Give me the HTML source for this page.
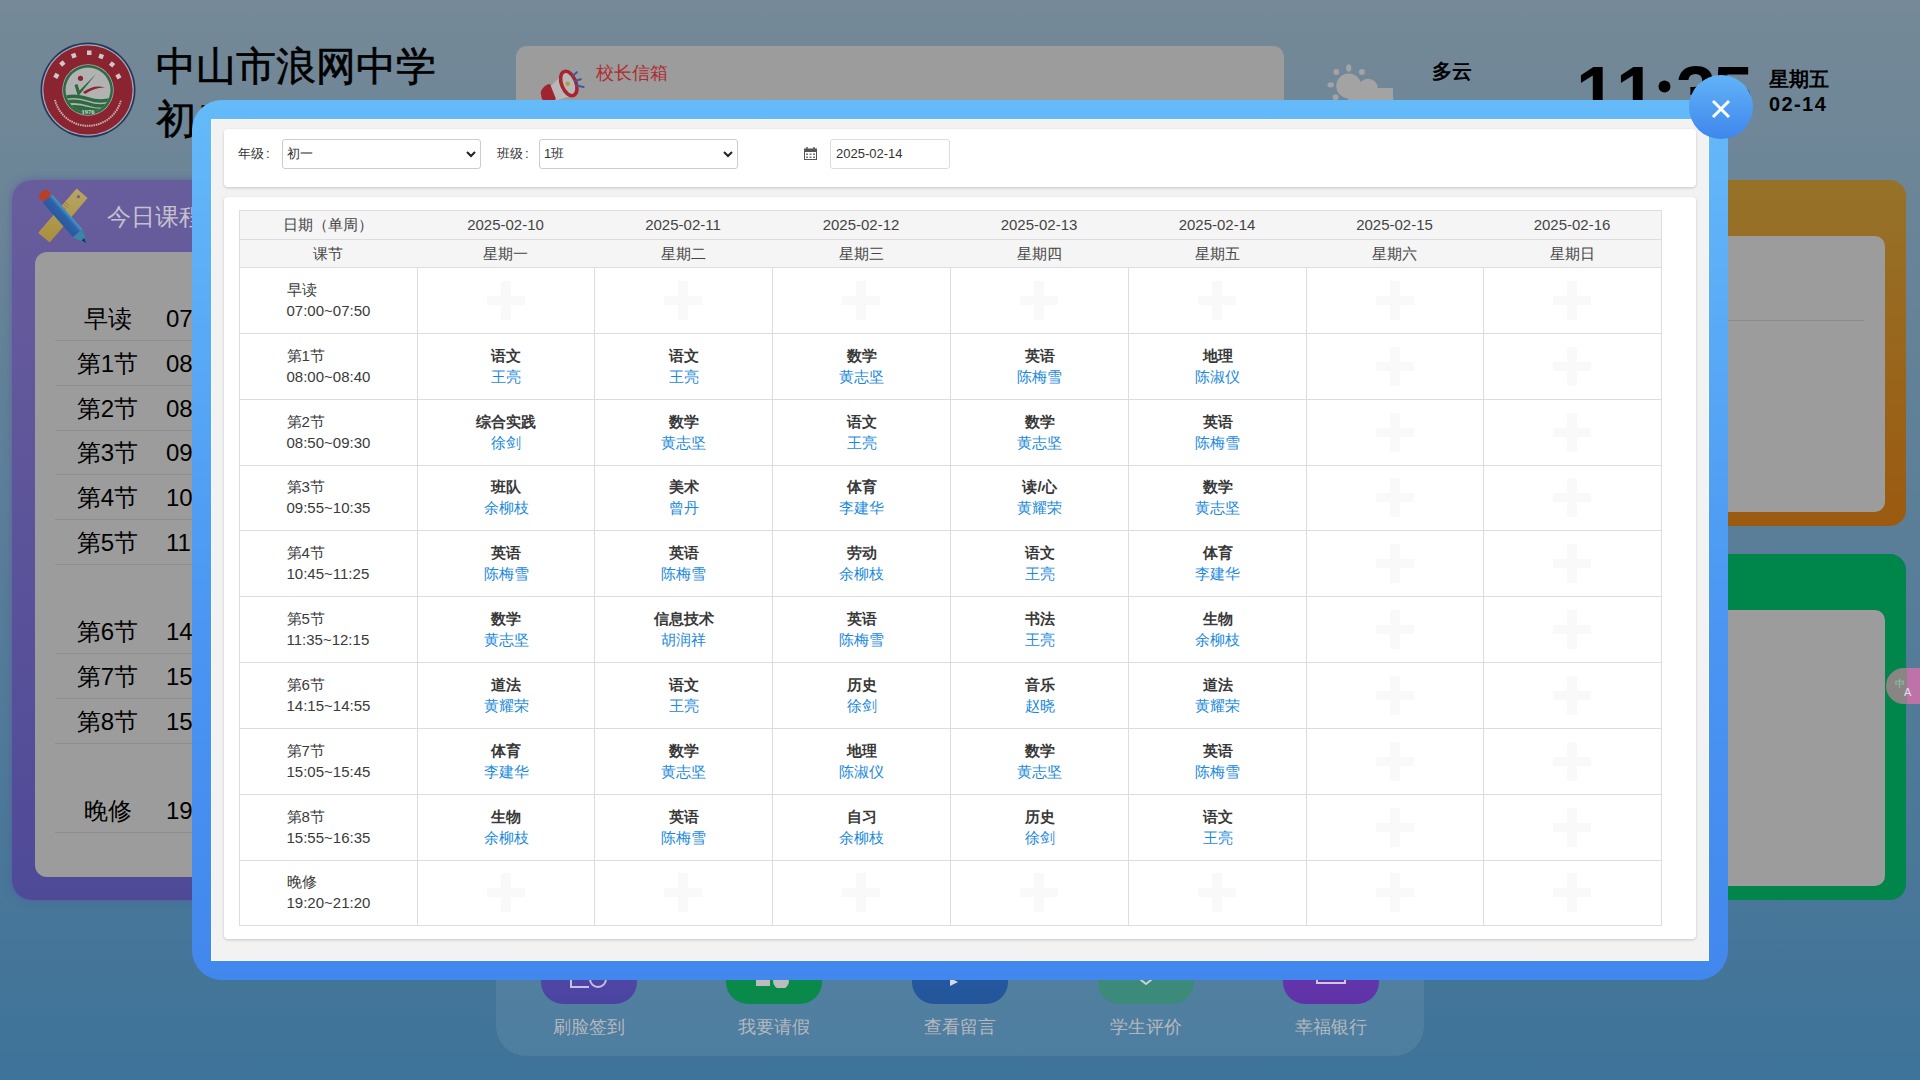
<!DOCTYPE html>
<html lang="zh">
<head>
<meta charset="utf-8">
<title>课程表</title>
<style>
*{box-sizing:border-box;margin:0;padding:0}
html,body{width:1920px;height:1080px;overflow:hidden}
body{position:relative;font-family:"Liberation Sans",sans-serif;background:linear-gradient(180deg,#758997 0%,#5a7e98 50%,#3e7399 100%)}
.abs{position:absolute}
/* page behind */
.title{position:absolute;left:156px;top:40px;font-size:40px;-webkit-text-stroke:0.6px #000;line-height:53px;color:#000;white-space:nowrap}
.notice{position:absolute;left:516px;top:46px;width:768px;height:120px;border-radius:11px;background:#9c9c9c}
.notice .t{position:absolute;left:80px;top:15px;font-size:18px;color:#b02a2e;line-height:24px}
.weather{position:absolute;left:1432px;top:58px;font-size:20px;font-weight:bold;color:#000;line-height:26px}
.clock{position:absolute;left:1576px;top:52px;font-size:72px;font-weight:bold;color:#000;line-height:80px;letter-spacing:0px}
.wk{position:absolute;left:1769px;top:67px;font-size:20px;font-weight:bold;color:#000;line-height:25px}
.lcard{position:absolute;left:12px;top:180px;width:400px;height:720px;border-radius:20px;background:linear-gradient(180deg,#685d9c 0%,#4f4a98 100%);box-shadow:0 0 8px rgba(90,80,160,.6)}
.lcard .h{position:absolute;left:95px;top:20px;font-size:24px;color:#c4c2cf;line-height:34px}
.lpanel{position:absolute;left:23px;top:72px;width:360px;height:625px;border-radius:12px;background:#9c9c9c}
.srow{position:absolute;left:20px;width:340px;height:45px;border-bottom:1px solid #8e8e8e}
.srow span{position:absolute;font-size:24px;line-height:45px;color:#000}
.srow .n{left:0;width:105px;text-align:center}
.srow .tm{left:111px}
.rcard{position:absolute;left:1560px;width:346px;height:346px;border-radius:16px}
.rpanel{position:absolute;left:22px;top:56px;width:303px;height:276px;border-radius:10px;background:#9c9c9c}
.dock{position:absolute;left:496px;top:940px;width:928px;height:116px;border-radius:30px;background:rgba(255,255,255,.075)}
.btn{position:absolute;top:924px;width:96px;height:80px;border-radius:22px}
.bl{position:absolute;top:1014px;width:140px;text-align:center;font-size:18px;line-height:26px;color:#b4b8bd}
/* modal */
.modal{position:absolute;left:192px;top:100px;width:1536px;height:880px;border-radius:30px;background:linear-gradient(180deg,#65baf9 0%,#4a96f2 60%,#4287ed 100%)}
.mbody{position:absolute;left:211px;top:119px;width:1498px;height:842px;background:#f2f2f2;border:1px solid #f2fbff}
.card{position:absolute;background:#fff;border-radius:4px;box-shadow:0 1px 3px rgba(0,0,0,.18)}
.lab{position:absolute;top:145px;font-size:13px;line-height:18px;color:#333}
.sel{position:absolute;top:139px;width:199px;height:30px;border:1px solid #ccc;border-radius:3px;background:#fff;font-size:13px;line-height:28px;padding-left:4px;color:#333}
.sel svg{position:absolute;right:4px;top:11px}
.inp{position:absolute;left:830px;top:139px;width:120px;height:30px;border:1px solid #ddd;border-radius:3px;background:#fff;font-family:"Liberation Sans",sans-serif;font-size:13px;line-height:28px;padding-left:5px;color:#333}
.thbg{position:absolute;background:#f5f5f5}
.hl{position:absolute;height:1px;background:#dddddd}
.vl{position:absolute;width:1px;background:#dddddd}
.hc{position:absolute;display:flex;align-items:center;justify-content:center;font-size:15px;color:#444;line-height:20px}
.pc{position:absolute;padding-bottom:2px;display:flex;align-items:center;justify-content:center;font-size:15px;color:#3a3a3a;line-height:21px}
.pi{text-align:left;width:83px}
.cc{position:absolute;padding-bottom:2px;display:flex;align-items:center;justify-content:center;text-align:center;font-size:15px;line-height:21px}
.cc b{color:#383838;font-weight:bold}
.cc span{color:#1a88dc}
.plus{position:absolute;width:38px;height:39px}
.plus:before{content:"";position:absolute;left:0;top:15px;width:38px;height:9px;background:#f9f9f9}
.plus:after{content:"";position:absolute;left:14px;top:0;width:10px;height:39px;background:#f9f9f9}
.close{position:absolute;left:1689px;top:75px;width:64px;height:64px;border-radius:50%;background:linear-gradient(180deg,#62b3f8 0%,#3f86ec 100%)}
.close svg{position:absolute;left:22px;top:24px}
.tr{position:absolute;left:1886px;top:668px;width:60px;height:36px;border-radius:18px;background:linear-gradient(90deg,#8a8585 0px,#8a8585 21px,#bf72a8 21px)}
</style>
</head>
<body>
<!-- logo -->
<svg class="abs" style="left:40px;top:42px" width="96" height="96" viewBox="0 0 96 96">
  <defs><clipPath id="inner"><circle cx="48" cy="48" r="22.5"/></clipPath></defs>
  <circle cx="48" cy="48" r="47.5" fill="#22365f"/>
  <circle cx="48" cy="48" r="45.8" fill="#a8a9b2"/>
  <circle cx="48" cy="48" r="44.6" fill="#8a2430"/>
  <circle cx="48" cy="48" r="25.8" fill="#a9a9ad"/>
  <circle cx="48" cy="48" r="25" fill="#2c6a40"/>
  <circle cx="48" cy="48" r="22.5" fill="#b2b2b2"/>
  <g clip-path="url(#inner)">
    <path d="M20 55 Q34 50 48 55 Q62 60 76 54 L76 57.5 Q62 63.5 48 58.5 Q34 53.5 20 58.5 Z" fill="#2c6a40"/>
    <path d="M20 60 Q34 55 48 60 Q62 65 76 59 L76 62.5 Q62 68.5 48 63.5 Q34 58.5 20 63.5 Z" fill="#2c6a40"/>
    <path d="M20 65 Q34 61 48 65 Q62 69 76 64 L76 80 L20 80 Z" fill="#2c6a40"/>
  </g>
  <circle cx="40.5" cy="36.3" r="2.6" fill="#8a2430"/>
  <path d="M34.5 43 L38 54.5 L56 32 L39.5 48.5 L37.5 42 Z" fill="#2c6a40"/>
  <path d="M43 50 Q54 42 65 45.5 Q55 45 45 52 Z" fill="#8a2430"/>
  <text x="48" y="72" font-size="6.5" font-weight="bold" fill="#d8d8d0" text-anchor="middle" font-family="Liberation Serif">1976</text>
  <g fill="#d0c8c8">
    <rect x="14" y="32" width="4.5" height="4.5" transform="rotate(-60 16 34)"/>
    <rect x="20" y="19.5" width="4.5" height="4.5" transform="rotate(-40 22 21.5)"/>
    <rect x="31.5" y="11.5" width="4.5" height="4.5" transform="rotate(-20 33.5 13.5)"/>
    <rect x="47" y="8.5" width="4.5" height="4.5"/>
    <rect x="59" y="12" width="4.5" height="4.5" transform="rotate(20 61 14)"/>
    <rect x="70" y="20" width="4.5" height="4.5" transform="rotate(40 72 22)"/>
    <rect x="76.5" y="32" width="4.5" height="4.5" transform="rotate(60 78.5 34)"/>
  </g>
  <path d="M15 58 A34 34 0 0 0 81 58" stroke="#c8b0b0" stroke-width="2" fill="none" stroke-dasharray="1.5 0.8"/>
</svg>
<div class="title">中山市浪网中学<br>初二</div>

<div class="notice">
  <svg class="abs" style="left:19px;top:16px" width="55" height="40" viewBox="0 0 55 40">
    <path d="M13 27 L28 12 L39 33 L19 39 Z" fill="#b8b8b8"/>
    <path d="M6 29 Q10 22 15 22 L21 37 Q17 41 9 40 Q5 35 6 29 Z" fill="#a02430"/>
    <ellipse cx="33.8" cy="21.5" rx="7.2" ry="12.8" transform="rotate(-22 33.8 21.5)" fill="#b9b9b9" stroke="#a8242e" stroke-width="3.6"/>
    <circle cx="32.7" cy="21.8" r="2.2" fill="#b09a40"/>
    <path d="M38 13.4 L41.9 10.2 M39.8 19 L45.8 17.3 M41.5 23.6 L48.6 25" stroke="#3e5a9a" stroke-width="2" stroke-linecap="round"/>
  </svg>
  <div class="t">校长信箱</div>
</div>
<!-- weather icon -->
<svg class="abs" style="left:1315px;top:55px" width="90" height="45" viewBox="0 0 90 45">
  <g fill="#a3a3a3">
    <ellipse cx="33.75" cy="13.1" rx="2.6" ry="3.75"/>
    <circle cx="21.3" cy="17.1" r="3"/><circle cx="46.9" cy="16.9" r="3"/>
    <ellipse cx="15.7" cy="29.8" rx="3.3" ry="2.6"/><circle cx="20.6" cy="42.2" r="3"/>
    <circle cx="33.75" cy="31" r="12.5"/>
    <circle cx="53" cy="33.5" r="9.8"/>
    <circle cx="70" cy="45" r="8.5"/>
    <rect x="33" y="33" width="45" height="12"/>
  </g>
</svg>
<div class="weather">多云</div>
<div class="clock" style="left:1576px">1</div><div class="clock" style="left:1616px">1</div><svg class="abs" style="left:1658px;top:80px" width="13" height="13" viewBox="0 0 13 13"><circle cx="6.5" cy="6.5" r="6" fill="#000"/></svg><div class="clock" style="left:1676px">3</div><div class="clock" style="left:1713px">5</div>
<div class="wk">星期五<br><span style="letter-spacing:1.4px">02-14</span></div>

<!-- left card -->
<div class="lcard">
  <svg class="abs" style="left:20px;top:2px" width="64" height="66" viewBox="0 0 64 66">
    <defs><linearGradient id="rul" x1="0" y1="0" x2="0" y2="1"><stop offset="0" stop-color="#b9a664"/><stop offset="1" stop-color="#a88e3c"/></linearGradient>
    <linearGradient id="pen" x1="0" y1="0" x2="0" y2="1"><stop offset="0" stop-color="#4b9cc6"/><stop offset="0.35" stop-color="#2d62a8"/><stop offset="1" stop-color="#2a58a0"/></linearGradient></defs>
    <path d="M44.6 6.4 L55.6 15.9 L17.7 60.5 L6.1 50.7 Z" fill="url(#rul)"/>
    <circle cx="46.4" cy="14.7" r="1.6" fill="#6a5f9a"/>
    <path d="M33 20 L37 23.5 M31.5 22 L35.5 25.5 M30 24 L34 27.5" stroke="#a07850" stroke-width="1"/>
    <g transform="translate(12.8 13.5) rotate(49)">
      <rect x="-5" y="-6" width="10" height="12" rx="4.5" fill="#b8402a"/>
      <rect x="4" y="-6.2" width="46" height="12.4" fill="url(#pen)"/>
      <path d="M50 -6.2 L61 -1.5 L61 1.5 L50 6.2 Z" fill="#3a86a8"/>
      <path d="M58 -2 L63 0 L58 2 Z" fill="#1a3870"/>
    </g>
  </svg>
  <div class="h">今日课程</div>
  <div class="lpanel">
    <div class="srow" style="top:44px"><span class="n">早读</span><span class="tm">07:00-07:50</span></div>
    <div class="srow" style="top:89px"><span class="n">第1节</span><span class="tm">08:00-08:40</span></div>
    <div class="srow" style="top:134px"><span class="n">第2节</span><span class="tm">08:50-09:30</span></div>
    <div class="srow" style="top:178px"><span class="n">第3节</span><span class="tm">09:55-10:35</span></div>
    <div class="srow" style="top:223px"><span class="n">第4节</span><span class="tm">10:45-11:25</span></div>
    <div class="srow" style="top:268px"><span class="n">第5节</span><span class="tm">11:35-12:15</span></div>
    <div class="srow" style="top:357px"><span class="n">第6节</span><span class="tm">14:15-14:55</span></div>
    <div class="srow" style="top:402px"><span class="n">第7节</span><span class="tm">15:05-15:45</span></div>
    <div class="srow" style="top:447px"><span class="n">第8节</span><span class="tm">15:55-16:35</span></div>
    <div class="srow" style="top:536px"><span class="n">晚修</span><span class="tm">19:20-21:20</span></div>
  </div>
</div>

<!-- right cards -->
<div class="rcard" style="top:180px;background:linear-gradient(180deg,#967229 0%,#9b5a10 100%)"><div class="rpanel" style="top:56px;height:276px"><div class="abs" style="left:0;top:84px;width:282px;height:1px;background:#8a8a8a"></div></div></div>
<div class="rcard" style="top:554px;background:#00854a"><div class="rpanel"></div></div>
<div class="tr"><svg class="abs" style="left:8px;top:8px" width="22" height="22" viewBox="0 0 22 22"><text x="1" y="11" font-size="10" fill="#7ccfa0">中</text><text x="10" y="20" font-size="11" fill="#e0e0f0" font-family="Liberation Sans">A</text></svg></div>

<!-- dock -->
<div class="dock"></div>
<div class="btn" style="left:541px;background:linear-gradient(180deg,#5e4ab0,#4a44a0)"><svg class="abs" style="left:28px;top:42px" width="40" height="24" viewBox="0 0 40 24"><path d="M2 6 V21 H20" stroke="#c8c0e8" stroke-width="2" fill="none"/><circle cx="29" cy="13" r="8" stroke="#c8c0e8" stroke-width="2" fill="none"/></svg></div>
<div class="btn" style="left:726px;background:#0a8a4a"><svg class="abs" style="left:28px;top:48px" width="40" height="16" viewBox="0 0 40 16"><rect x="2" y="4" width="14" height="10" fill="#bcbcbc"/><circle cx="27" cy="9" r="8" fill="#bcbcbc"/></svg></div>
<div class="btn" style="left:912px;background:linear-gradient(180deg,#2a5fa8,#22559a)"><svg class="abs" style="left:36px;top:52px" width="16" height="16" viewBox="0 0 16 16"><path d="M2 2 L10 6 L2 10 Z" fill="#d8d8e8"/></svg></div>
<div class="btn" style="left:1098px;background:#3b8a7a"><svg class="abs" style="left:36px;top:50px" width="24" height="16" viewBox="0 0 24 16"><path d="M2 2 L12 10 L22 2" stroke="#c8d8d0" stroke-width="2" fill="none"/></svg></div>
<div class="btn" style="left:1283px;background:linear-gradient(180deg,#6a3ab0,#6032a8)"><svg class="abs" style="left:32px;top:48px" width="32" height="16" viewBox="0 0 32 16"><path d="M2 0 V11 H30 V0" stroke="#d0c8e0" stroke-width="2" fill="none"/></svg></div>
<div class="bl" style="left:519px">刷脸签到</div>
<div class="bl" style="left:704px">我要请假</div>
<div class="bl" style="left:890px">查看留言</div>
<div class="bl" style="left:1076px">学生评价</div>
<div class="bl" style="left:1261px">幸福银行</div>

<!-- modal -->
<div class="modal"></div>
<div class="mbody"></div>
<div class="card" style="left:224px;top:129px;width:1472px;height:58px"></div>
<div class="lab" style="left:238px">年级<span style="margin-left:2px">:</span></div>
<div class="sel" style="left:282px">初一<svg width="10" height="7" viewBox="0 0 10 7"><path d="M1 1 L5 5 L9 1" stroke="#222" stroke-width="2" fill="none"/></svg></div>
<div class="lab" style="left:497px">班级<span style="margin-left:2px">:</span></div>
<div class="sel" style="left:539px">1班<svg width="10" height="7" viewBox="0 0 10 7"><path d="M1 1 L5 5 L9 1" stroke="#222" stroke-width="2" fill="none"/></svg></div>
<svg class="abs" style="left:804px;top:147px" width="13" height="13" viewBox="0 0 13 13"><rect x="0.5" y="2" width="12" height="10.5" fill="none" stroke="#555" stroke-width="1"/><rect x="0.5" y="2" width="12" height="3" fill="#555"/><path d="M3 0 V3 M10 0 V3" stroke="#555" stroke-width="1.5"/><g fill="#777"><rect x="2" y="6.5" width="2" height="1.5"/><rect x="5.5" y="6.5" width="2" height="1.5"/><rect x="9" y="6.5" width="2" height="1.5"/><rect x="2" y="9.5" width="2" height="1.5"/><rect x="5.5" y="9.5" width="2" height="1.5"/><rect x="9" y="9.5" width="2" height="1.5"/></g></svg>
<div class="inp">2025-02-14</div>
<div class="card" style="left:224px;top:197px;width:1472px;height:742px"></div>
<div class="thbg" style="left:239px;top:210px;width:1423px;height:57px"></div>
<div class="hl" style="left:239px;top:210px;width:1423px"></div>
<div class="hl" style="left:239px;top:239px;width:1423px"></div>
<div class="hl" style="left:239px;top:267px;width:1423px"></div>
<div class="hl" style="left:239px;top:333px;width:1423px"></div>
<div class="hl" style="left:239px;top:399px;width:1423px"></div>
<div class="hl" style="left:239px;top:465px;width:1423px"></div>
<div class="hl" style="left:239px;top:530px;width:1423px"></div>
<div class="hl" style="left:239px;top:596px;width:1423px"></div>
<div class="hl" style="left:239px;top:662px;width:1423px"></div>
<div class="hl" style="left:239px;top:728px;width:1423px"></div>
<div class="hl" style="left:239px;top:794px;width:1423px"></div>
<div class="hl" style="left:239px;top:860px;width:1423px"></div>
<div class="hl" style="left:239px;top:925px;width:1423px"></div>
<div class="vl" style="left:239px;top:210px;height:716px"></div>
<div class="vl" style="left:1661px;top:210px;height:716px"></div>
<div class="vl" style="left:417px;top:267px;height:659px"></div>
<div class="vl" style="left:594px;top:267px;height:659px"></div>
<div class="vl" style="left:772px;top:267px;height:659px"></div>
<div class="vl" style="left:950px;top:267px;height:659px"></div>
<div class="vl" style="left:1128px;top:267px;height:659px"></div>
<div class="vl" style="left:1306px;top:267px;height:659px"></div>
<div class="vl" style="left:1483px;top:267px;height:659px"></div>
<div class="hc" style="left:239px;top:211px;width:178px;height:28px">日期（单周）</div>
<div class="hc" style="left:239px;top:240px;width:178px;height:27px">课节</div>
<div class="hc" style="left:417px;top:211px;width:177px;height:28px">2025-02-10</div>
<div class="hc" style="left:417px;top:240px;width:177px;height:27px">星期一</div>
<div class="hc" style="left:594px;top:211px;width:178px;height:28px">2025-02-11</div>
<div class="hc" style="left:594px;top:240px;width:178px;height:27px">星期二</div>
<div class="hc" style="left:772px;top:211px;width:178px;height:28px">2025-02-12</div>
<div class="hc" style="left:772px;top:240px;width:178px;height:27px">星期三</div>
<div class="hc" style="left:950px;top:211px;width:178px;height:28px">2025-02-13</div>
<div class="hc" style="left:950px;top:240px;width:178px;height:27px">星期四</div>
<div class="hc" style="left:1128px;top:211px;width:178px;height:28px">2025-02-14</div>
<div class="hc" style="left:1128px;top:240px;width:178px;height:27px">星期五</div>
<div class="hc" style="left:1306px;top:211px;width:177px;height:28px">2025-02-15</div>
<div class="hc" style="left:1306px;top:240px;width:177px;height:27px">星期六</div>
<div class="hc" style="left:1483px;top:211px;width:178px;height:28px">2025-02-16</div>
<div class="hc" style="left:1483px;top:240px;width:178px;height:27px">星期日</div>
<div class="pc" style="left:239px;top:268px;width:178px;height:65px"><div class="pi">早读<br>07:00~07:50</div></div>
<div class="plus" style="left:486.5px;top:280.5px"></div>
<div class="plus" style="left:664.0px;top:280.5px"></div>
<div class="plus" style="left:842.0px;top:280.5px"></div>
<div class="plus" style="left:1020.0px;top:280.5px"></div>
<div class="plus" style="left:1198.0px;top:280.5px"></div>
<div class="plus" style="left:1375.5px;top:280.5px"></div>
<div class="plus" style="left:1553.0px;top:280.5px"></div>
<div class="pc" style="left:239px;top:334px;width:178px;height:65px"><div class="pi">第1节<br>08:00~08:40</div></div>
<div class="cc" style="left:418px;top:334px;width:176px;height:65px"><div><b>语文</b><br><span>王亮</span></div></div>
<div class="cc" style="left:595px;top:334px;width:177px;height:65px"><div><b>语文</b><br><span>王亮</span></div></div>
<div class="cc" style="left:773px;top:334px;width:177px;height:65px"><div><b>数学</b><br><span>黄志坚</span></div></div>
<div class="cc" style="left:951px;top:334px;width:177px;height:65px"><div><b>英语</b><br><span>陈梅雪</span></div></div>
<div class="cc" style="left:1129px;top:334px;width:177px;height:65px"><div><b>地理</b><br><span>陈淑仪</span></div></div>
<div class="plus" style="left:1375.5px;top:346.5px"></div>
<div class="plus" style="left:1553.0px;top:346.5px"></div>
<div class="pc" style="left:239px;top:400px;width:178px;height:65px"><div class="pi">第2节<br>08:50~09:30</div></div>
<div class="cc" style="left:418px;top:400px;width:176px;height:65px"><div><b>综合实践</b><br><span>徐剑</span></div></div>
<div class="cc" style="left:595px;top:400px;width:177px;height:65px"><div><b>数学</b><br><span>黄志坚</span></div></div>
<div class="cc" style="left:773px;top:400px;width:177px;height:65px"><div><b>语文</b><br><span>王亮</span></div></div>
<div class="cc" style="left:951px;top:400px;width:177px;height:65px"><div><b>数学</b><br><span>黄志坚</span></div></div>
<div class="cc" style="left:1129px;top:400px;width:177px;height:65px"><div><b>英语</b><br><span>陈梅雪</span></div></div>
<div class="plus" style="left:1375.5px;top:412.5px"></div>
<div class="plus" style="left:1553.0px;top:412.5px"></div>
<div class="pc" style="left:239px;top:466px;width:178px;height:64px"><div class="pi">第3节<br>09:55~10:35</div></div>
<div class="cc" style="left:418px;top:466px;width:176px;height:64px"><div><b>班队</b><br><span>余柳枝</span></div></div>
<div class="cc" style="left:595px;top:466px;width:177px;height:64px"><div><b>美术</b><br><span>曾丹</span></div></div>
<div class="cc" style="left:773px;top:466px;width:177px;height:64px"><div><b>体育</b><br><span>李建华</span></div></div>
<div class="cc" style="left:951px;top:466px;width:177px;height:64px"><div><b>读/心</b><br><span>黄耀荣</span></div></div>
<div class="cc" style="left:1129px;top:466px;width:177px;height:64px"><div><b>数学</b><br><span>黄志坚</span></div></div>
<div class="plus" style="left:1375.5px;top:478.0px"></div>
<div class="plus" style="left:1553.0px;top:478.0px"></div>
<div class="pc" style="left:239px;top:531px;width:178px;height:65px"><div class="pi">第4节<br>10:45~11:25</div></div>
<div class="cc" style="left:418px;top:531px;width:176px;height:65px"><div><b>英语</b><br><span>陈梅雪</span></div></div>
<div class="cc" style="left:595px;top:531px;width:177px;height:65px"><div><b>英语</b><br><span>陈梅雪</span></div></div>
<div class="cc" style="left:773px;top:531px;width:177px;height:65px"><div><b>劳动</b><br><span>余柳枝</span></div></div>
<div class="cc" style="left:951px;top:531px;width:177px;height:65px"><div><b>语文</b><br><span>王亮</span></div></div>
<div class="cc" style="left:1129px;top:531px;width:177px;height:65px"><div><b>体育</b><br><span>李建华</span></div></div>
<div class="plus" style="left:1375.5px;top:543.5px"></div>
<div class="plus" style="left:1553.0px;top:543.5px"></div>
<div class="pc" style="left:239px;top:597px;width:178px;height:65px"><div class="pi">第5节<br>11:35~12:15</div></div>
<div class="cc" style="left:418px;top:597px;width:176px;height:65px"><div><b>数学</b><br><span>黄志坚</span></div></div>
<div class="cc" style="left:595px;top:597px;width:177px;height:65px"><div><b>信息技术</b><br><span>胡润祥</span></div></div>
<div class="cc" style="left:773px;top:597px;width:177px;height:65px"><div><b>英语</b><br><span>陈梅雪</span></div></div>
<div class="cc" style="left:951px;top:597px;width:177px;height:65px"><div><b>书法</b><br><span>王亮</span></div></div>
<div class="cc" style="left:1129px;top:597px;width:177px;height:65px"><div><b>生物</b><br><span>余柳枝</span></div></div>
<div class="plus" style="left:1375.5px;top:609.5px"></div>
<div class="plus" style="left:1553.0px;top:609.5px"></div>
<div class="pc" style="left:239px;top:663px;width:178px;height:65px"><div class="pi">第6节<br>14:15~14:55</div></div>
<div class="cc" style="left:418px;top:663px;width:176px;height:65px"><div><b>道法</b><br><span>黄耀荣</span></div></div>
<div class="cc" style="left:595px;top:663px;width:177px;height:65px"><div><b>语文</b><br><span>王亮</span></div></div>
<div class="cc" style="left:773px;top:663px;width:177px;height:65px"><div><b>历史</b><br><span>徐剑</span></div></div>
<div class="cc" style="left:951px;top:663px;width:177px;height:65px"><div><b>音乐</b><br><span>赵晓</span></div></div>
<div class="cc" style="left:1129px;top:663px;width:177px;height:65px"><div><b>道法</b><br><span>黄耀荣</span></div></div>
<div class="plus" style="left:1375.5px;top:675.5px"></div>
<div class="plus" style="left:1553.0px;top:675.5px"></div>
<div class="pc" style="left:239px;top:729px;width:178px;height:65px"><div class="pi">第7节<br>15:05~15:45</div></div>
<div class="cc" style="left:418px;top:729px;width:176px;height:65px"><div><b>体育</b><br><span>李建华</span></div></div>
<div class="cc" style="left:595px;top:729px;width:177px;height:65px"><div><b>数学</b><br><span>黄志坚</span></div></div>
<div class="cc" style="left:773px;top:729px;width:177px;height:65px"><div><b>地理</b><br><span>陈淑仪</span></div></div>
<div class="cc" style="left:951px;top:729px;width:177px;height:65px"><div><b>数学</b><br><span>黄志坚</span></div></div>
<div class="cc" style="left:1129px;top:729px;width:177px;height:65px"><div><b>英语</b><br><span>陈梅雪</span></div></div>
<div class="plus" style="left:1375.5px;top:741.5px"></div>
<div class="plus" style="left:1553.0px;top:741.5px"></div>
<div class="pc" style="left:239px;top:795px;width:178px;height:65px"><div class="pi">第8节<br>15:55~16:35</div></div>
<div class="cc" style="left:418px;top:795px;width:176px;height:65px"><div><b>生物</b><br><span>余柳枝</span></div></div>
<div class="cc" style="left:595px;top:795px;width:177px;height:65px"><div><b>英语</b><br><span>陈梅雪</span></div></div>
<div class="cc" style="left:773px;top:795px;width:177px;height:65px"><div><b>自习</b><br><span>余柳枝</span></div></div>
<div class="cc" style="left:951px;top:795px;width:177px;height:65px"><div><b>历史</b><br><span>徐剑</span></div></div>
<div class="cc" style="left:1129px;top:795px;width:177px;height:65px"><div><b>语文</b><br><span>王亮</span></div></div>
<div class="plus" style="left:1375.5px;top:807.5px"></div>
<div class="plus" style="left:1553.0px;top:807.5px"></div>
<div class="pc" style="left:239px;top:861px;width:178px;height:64px"><div class="pi">晚修<br>19:20~21:20</div></div>
<div class="plus" style="left:486.5px;top:873.0px"></div>
<div class="plus" style="left:664.0px;top:873.0px"></div>
<div class="plus" style="left:842.0px;top:873.0px"></div>
<div class="plus" style="left:1020.0px;top:873.0px"></div>
<div class="plus" style="left:1198.0px;top:873.0px"></div>
<div class="plus" style="left:1375.5px;top:873.0px"></div>
<div class="plus" style="left:1553.0px;top:873.0px"></div>
<div class="close"><svg width="20" height="20" viewBox="0 0 20 20"><path d="M2 2 L18 18 M18 2 L2 18" stroke="#fff" stroke-width="3"/></svg></div>
</body>
</html>
